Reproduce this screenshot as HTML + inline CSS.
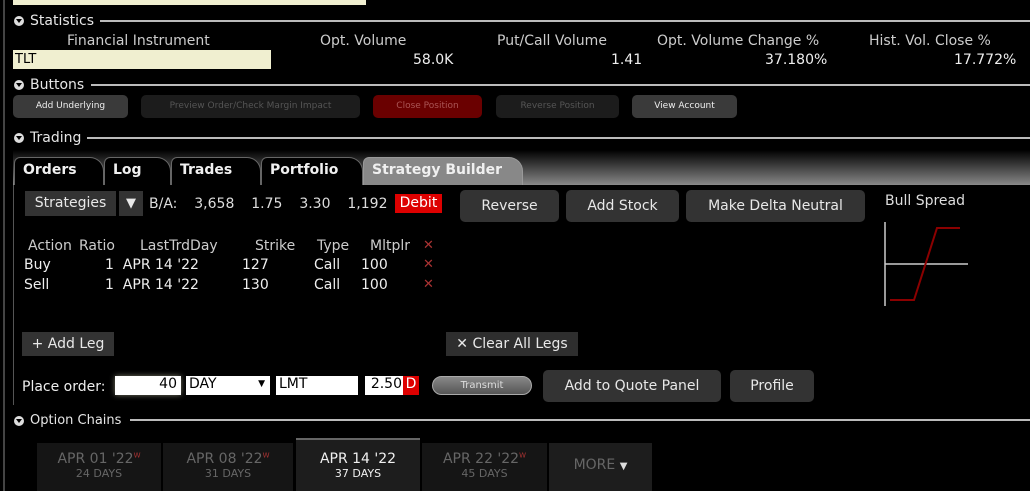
<!DOCTYPE html>
<html><head><meta charset="utf-8"><style>
*{margin:0;padding:0;box-sizing:border-box}
body{width:1030px;height:491px;background:#000;position:relative;overflow:hidden;font-family:"DejaVu Sans","Liberation Sans",sans-serif;color:#ddd}
.a{position:absolute;white-space:nowrap}
.sec{position:absolute;left:14px;font-size:14px;color:#e6e6e6;display:flex;align-items:center}
.sec .tri{width:10px;height:10px;border-radius:50%;background:#ddd;margin-right:6px;position:relative}
.sec .tri:after{content:"";position:absolute;left:2px;top:3px;border-left:3px solid transparent;border-right:3px solid transparent;border-top:4px solid #000}
.line{position:absolute;height:2px;background:#bbb;right:0}
.sb{position:absolute;height:23px;border-radius:5px;font-size:9px;text-align:center;line-height:23px;white-space:nowrap}
.btn{position:absolute;background:#333;border-radius:5px;color:#e8e8e8;font-size:14px;text-align:center;white-space:nowrap}
.tab{position:absolute;top:157px;height:28px;background:#000;border:1px solid #666;border-bottom:none;border-radius:6px 14px 0 0;font-weight:bold;font-size:14px;color:#f0f0f0;padding:4px 0 0 8px}
.x{color:#a33;font-weight:bold;font-size:13px}
.dt{position:absolute;top:443px;height:48px;background:#151515;text-align:center;color:#666;white-space:nowrap}
.dt b{display:block;font-weight:normal;font-size:14px;margin-top:8px}
.dt i{display:block;font-style:normal;font-size:11px}
.dt sup{color:#a33;font-size:7px}
</style></head><body>
<div class="a" style="left:3px;top:0;width:2px;height:491px;background:#444"></div>
<div class="a" style="left:13px;top:0;width:353px;height:5px;background:#f0efd0"></div>

<div class="sec" style="top:13px"><span class="tri"></span>Statistics</div>
<div class="line" style="left:100px;top:20px"></div>
<div class="a" style="left:67px;top:33px;font-size:14px;color:#ccc">Financial Instrument</div>
<div class="a" style="left:320px;top:33px;font-size:14px;color:#ccc">Opt. Volume</div>
<div class="a" style="left:497px;top:33px;font-size:14px;color:#ccc">Put/Call Volume</div>
<div class="a" style="left:657px;top:33px;font-size:14px;color:#ccc">Opt. Volume Change %</div>
<div class="a" style="left:869px;top:33px;font-size:14px;color:#ccc">Hist. Vol. Close %</div>
<div class="a" style="left:13px;top:50px;width:258px;height:19px;background:#f0efd0;color:#000;font-size:13px;padding-left:2px;line-height:19px">TLT</div>
<div class="a" style="left:413px;top:52px;font-size:14px;color:#eee">58.0K</div>
<div class="a" style="left:611px;top:52px;font-size:14px;color:#eee">1.41</div>
<div class="a" style="left:765px;top:52px;font-size:14px;color:#eee">37.180%</div>
<div class="a" style="left:954px;top:52px;font-size:14px;color:#eee">17.772%</div>

<div class="sec" style="top:77px"><span class="tri"></span>Buttons</div>
<div class="line" style="left:91px;top:84px"></div>
<div class="sb" style="left:13px;top:95px;width:115px;background:#3a3a3a;color:#eee">Add Underlying</div>
<div class="sb" style="left:141px;top:95px;width:219px;background:#1c1c1c;color:#555">Preview Order/Check Margin Impact</div>
<div class="sb" style="left:373px;top:95px;width:109px;background:#6a0000;color:#a55">Close Position</div>
<div class="sb" style="left:496px;top:95px;width:123px;background:#1c1c1c;color:#555">Reverse Position</div>
<div class="sb" style="left:632px;top:95px;width:105px;background:#3a3a3a;color:#eee">View Account</div>

<div class="sec" style="top:130px"><span class="tri"></span>Trading</div>
<div class="line" style="left:87px;top:137px"></div>

<div class="a" style="left:13px;top:150px;width:1017px;height:35px;background:linear-gradient(#000,#888)"></div>
<div class="a" style="left:13px;top:184px;width:1017px;height:1px;background:#888"></div>
<div class="a" style="left:13px;top:185px;width:1px;height:220px;background:#555"></div>
<div class="tab" style="left:14px;width:90px">Orders</div>
<div class="tab" style="left:104px;width:67px">Log</div>
<div class="tab" style="left:171px;width:90px">Trades</div>
<div class="tab" style="left:261px;width:102px">Portfolio</div>
<div class="tab" style="left:363px;width:160px;background:#888;border-color:#999">Strategy Builder</div>

<div class="btn" style="left:25px;top:191px;width:91px;height:25px;line-height:25px;border-radius:0">Strategies</div>
<div class="btn" style="left:119px;top:191px;width:24px;height:25px;line-height:25px;border-radius:0;font-size:13px">▼</div>
<div class="a" style="left:149px;top:196px;font-size:14px;color:#ddd;word-spacing:4px">B/A: &nbsp;3,658 &nbsp;1.75 &nbsp;3.30 &nbsp;1,192</div>
<div class="a" style="left:395px;top:194px;width:47px;height:19px;background:#d00;color:#fff;font-size:14px;text-align:center;line-height:19px">Debit</div>
<div class="btn" style="left:460px;top:190px;width:99px;height:32px;line-height:32px">Reverse</div>
<div class="btn" style="left:566px;top:190px;width:113px;height:32px;line-height:32px">Add Stock</div>
<div class="btn" style="left:686px;top:190px;width:179px;height:32px;line-height:32px">Make Delta Neutral</div>
<div class="a" style="left:885px;top:193px;font-size:14px;color:#ddd">Bull Spread</div>
<svg class="a" style="left:880px;top:218px" width="90" height="90"><path d="M5 4V88M5 46H88" stroke="#ccc" stroke-width="1.5" fill="none"/><path d="M10 82H34L57 10H80" stroke="#8b0000" stroke-width="2" fill="none"/></svg>

<div class="a" style="left:28px;top:238px;font-size:14px;color:#ccc">Action</div>
<div class="a" style="left:79px;top:238px;font-size:14px;color:#ccc">Ratio</div>
<div class="a" style="left:140px;top:238px;font-size:14px;color:#ccc">LastTrdDay</div>
<div class="a" style="left:255px;top:238px;font-size:14px;color:#ccc">Strike</div>
<div class="a" style="left:317px;top:238px;font-size:14px;color:#ccc">Type</div>
<div class="a" style="left:370px;top:238px;font-size:14px;color:#ccc">Mltplr</div>
<div class="a x" style="left:423px;top:238px">✕</div>
<div class="a" style="left:24px;top:257px;font-size:14px;color:#eee">Buy</div>
<div class="a" style="left:105px;top:257px;font-size:14px;color:#eee">1 &nbsp;APR 14 '22</div>
<div class="a" style="left:242px;top:257px;font-size:14px;color:#eee">127</div>
<div class="a" style="left:314px;top:257px;font-size:14px;color:#eee">Call</div>
<div class="a" style="left:361px;top:257px;font-size:14px;color:#eee">100</div>
<div class="a x" style="left:423px;top:257px">✕</div>
<div class="a" style="left:24px;top:277px;font-size:14px;color:#eee">Sell</div>
<div class="a" style="left:105px;top:277px;font-size:14px;color:#eee">1 &nbsp;APR 14 '22</div>
<div class="a" style="left:242px;top:277px;font-size:14px;color:#eee">130</div>
<div class="a" style="left:314px;top:277px;font-size:14px;color:#eee">Call</div>
<div class="a" style="left:361px;top:277px;font-size:14px;color:#eee">100</div>
<div class="a x" style="left:423px;top:277px">✕</div>

<div class="btn" style="left:22px;top:332px;width:92px;height:24px;line-height:24px;border-radius:0">+ Add Leg</div>
<div class="btn" style="left:446px;top:332px;width:132px;height:24px;line-height:24px;border-radius:0;background:#2e2e2e">✕ Clear All Legs</div>

<div class="a" style="left:22px;top:379px;font-size:14px;color:#eee">Place order:</div>
<div class="a" style="left:115px;top:376px;width:66px;height:19px;background:#fff;color:#000;font-size:14px;text-align:right;padding-right:4px;box-shadow:0 0 6px #776">40</div>
<div class="a" style="left:186px;top:376px;width:84px;height:19px;background:#fff;color:#000;font-size:14px;padding-left:3px">DAY<span style="position:absolute;right:5px;font-size:9px;top:3px">▼</span></div>
<div class="a" style="left:276px;top:376px;width:82px;height:19px;background:#fff;color:#000;font-size:14px;padding-left:3px">LMT</div>
<div class="a" style="left:365px;top:376px;width:38px;height:19px;background:#fff;color:#000;font-size:14px;text-align:right;padding-right:1px">2.50</div>
<div class="a" style="left:403px;top:376px;width:16px;height:19px;background:#d00;color:#fff;font-size:14px;text-align:center">D</div>
<div class="a" style="left:432px;top:376px;width:100px;height:19px;border-radius:10px;background:linear-gradient(#888,#555);border:1px solid #aaa;color:#ddd;font-size:10px;text-align:center;line-height:17px">Transmit</div>
<div class="btn" style="left:543px;top:370px;width:178px;height:32px;line-height:32px">Add to Quote Panel</div>
<div class="btn" style="left:730px;top:370px;width:84px;height:32px;line-height:32px">Profile</div>

<div class="sec" style="top:413px;font-size:13px"><span class="tri"></span>Option Chains</div>
<div class="line" style="left:130px;top:419px"></div>

<div class="dt" style="left:37px;width:124px"><b>APR 01 '22<sup>W</sup></b><i>24 DAYS</i></div>
<div class="dt" style="left:163px;width:130px"><b>APR 08 '22<sup>W</sup></b><i>31 DAYS</i></div>
<div class="dt" style="left:296px;width:124px;background:#1d1d1d;border-top:2px solid #666;top:438px;height:53px;color:#f0f0f0"><b style="margin-top:11px">APR 14 '22</b><i>37 DAYS</i></div>
<div class="dt" style="left:422px;width:125px"><b>APR 22 '22<sup>W</sup></b><i>45 DAYS</i></div>
<div class="dt" style="left:549px;width:103px;background:#1d1d1d"><b style="margin-top:14px">MORE <span style="color:#ddd;font-size:10px">▼</span></b></div>
</body></html>
